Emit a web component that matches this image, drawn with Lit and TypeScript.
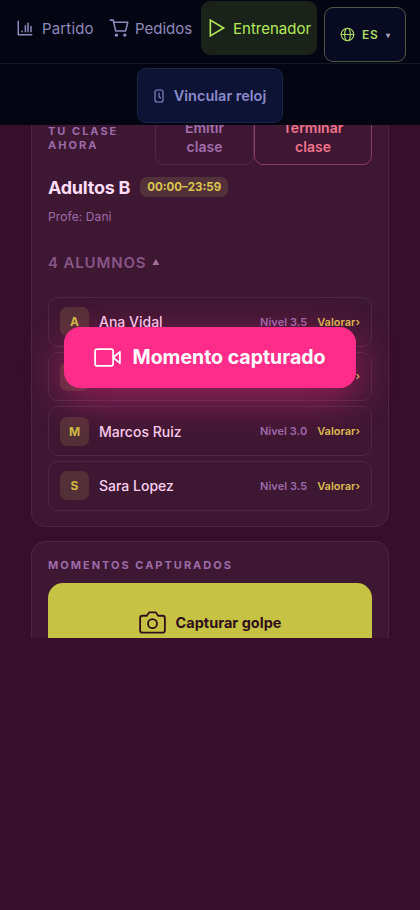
import { LitElement, html, css, svg } from "lit";
import { customElement } from "lit/decorators.js";

const icon = (cls: string, body: unknown, box = "0 0 24 24") =>
  html`<svg class="icon ${cls}" viewBox=${box} fill="none" stroke="currentColor" stroke-linecap="round" stroke-linejoin="round">${body}</svg>`;

const chart = svg`<path d="M3 3v18h18M8 16v1M12.500 9v8M16 5.500V17M20 10v7"/>`;
const cart = svg`<path d="M1.500 2.500h3.500l3 13h12l2.500-10.500H5.800"/><circle cx="9" cy="20.500" r="1.100" fill="currentColor"/><circle cx="19" cy="20.500" r="1.100" fill="currentColor"/>`;
const play = svg`<path d="M4 2.500v19L20 12z" stroke-linejoin="miter"/>`;
const globe = svg`<circle cx="12" cy="12" r="10"/><ellipse cx="12" cy="12" rx="4.500" ry="10"/><path d="M2 12h20"/>`;
const watch = svg`<rect x="1" y="1" width="8" height="12" rx="2"/><path d="M5 4v3.500l1.500 1.500"/>`;
const video = svg`<rect x="1" y="4.500" width="16" height="15" rx="2"/><path d="M17 12l6-5v10z"/>`;
const camera = svg`<path d="M23 19a2 2 0 0 1-2 2H3a2 2 0 0 1-2-2V8a2 2 0 0 1 2-2h4l2-3h6l2 3h4a2 2 0 0 1 2 2z"/><circle cx="12" cy="13" r="4"/>`;

@customElement("student-row")
class StudentRow extends LitElement {
  static properties = { name: {}, level: {} };
  declare name: string;
  declare level: string;
  static styles = css`
    :host { display: flex; align-items: center; box-sizing: border-box; height: 49.500px; padding: 0 11px; border: 1px solid #4d2848; border-radius: 10px; }
    .avatar { width: 29px; height: 29px; border-radius: 7px; background: #533037; color: #cdbb45; display: grid; place-items: center; font-size: 12px; font-weight: 700; }
    .name { flex: 1; margin-left: 10px; font-size: 14px; font-weight: 500; color: #fbd0f0; }
    .level { font-size: 11px; font-weight: 600; color: #9d6bac; letter-spacing: 0.050px; }
    .rate { margin-left: 10px; font-size: 11px; font-weight: 600; color: #dcbd50; }
  `;
  render() {
    return html`<span class="avatar">${this.name[0]}</span><span class="name">${this.name}</span>
      <span class="level">Nivel ${this.level}</span><span class="rate">Valorar›</span>`;
  }
}

@customElement("app-root")
class AppRoot extends LitElement {
  static styles = css`
    :host { display: block; position: relative; height: 910px; overflow: hidden; background: #370f2a; font-family: Inter, "Liberation Sans", sans-serif; }
    * { box-sizing: border-box; }
    .icon { display: block; flex: none; }
    header { height: 125px; background: #030612; color: #9189bd; }
    nav { height: 64px; border-bottom: 1px solid #141724; display: flex; align-items: flex-start; }
    .tab { display: flex; align-items: center; height: 54px; margin-top: 1px; font-size: 15px; }
    .t1 { padding-left: 16px; width: 109px; gap: 8px; letter-spacing: 0.150px; }
    .t2 { width: 92px; gap: 6px; }
    .t3 { width: 116px; padding-left: 6px; gap: 6px; border-radius: 9px; background: #1b2219; color: #b2eb5b; }
    .i18 { width: 18px; height: 18px; stroke-width: 2; }
    .i20 { width: 20px; height: 20px; stroke-width: 1.900; }
    .lang { display: flex; align-items: center; width: 82px; height: 55px; margin: 7px 0 0 7px; padding-left: 15px; border: 1px solid #4f5745; border-radius: 9px; background: #080a22; color: #acd960; font-size: 12px; font-weight: 600; letter-spacing: 0.800px; }
    .lang b { font-weight: 600; margin: 0 7px 0 7px; }
    .caret { color: #a9a6c0; font-size: 8px; }
    .i14 { width: 15px; height: 15px; stroke-width: 1.900; }
    .sub { display: flex; justify-content: center; padding-top: 4px; }
    .pair { display: flex; align-items: center; justify-content: center; gap: 10px; width: 146px; height: 55px; border: 1px solid #1a2446; border-radius: 9px; background: #0d1335; font-size: 14.500px; font-weight: 600; color: #8b8bcb; }
    .watch { width: 10px; height: 14px; stroke-width: 1.100; }
    main { height: 512.500px; overflow: hidden; padding: 0 31px; }
    .card { border: 1px solid #4b2744; border-radius: 14px; background: #3e1732; padding: 16px; }
    .first { margin-top: -32px; height: 434px; }
    .top { display: flex; align-items: center; }
    .label { font-size: 11px; line-height: 14px; font-weight: 700; letter-spacing: 2px; color: #9d6ba9; }
    .top .label { width: 107px; }
    .btn { height: 55px; display: grid; place-items: center; text-align: center; border: 1px solid #50294a; border-radius: 9px; font-size: 14px; line-height: 18.500px; font-weight: 600; color: #a36ead; }
    .emit { width: 99px; }
    .end { width: 118px; border-color: #8c3d62; color: #f0738c; }
    .title { display: flex; align-items: center; height: 20px; margin-top: 12px; gap: 10px; font-size: 18px; font-weight: 700; color: #ffdcf7; letter-spacing: -0.250px; }
    .chip { height: 20px; width: 88px; display: grid; place-items: center; border-radius: 7px; background: #53313a; color: #dac44e; font-size: 11.500px; letter-spacing: 0; }
    .coach { margin-top: 11px; line-height: 17px; font-size: 12px; letter-spacing: 0.100px; color: #a06bab; }
    .count { display: flex; align-items: center; gap: 6px; height: 20px; margin-top: 27px; font-size: 15px; font-weight: 600; letter-spacing: 0.850px; color: #895587; }
    .up { width: 7px; height: 6px; background: #a27299; clip-path: polygon(50% 0, 100% 100%, 0 100%); }
    .list { display: grid; gap: 5.200px; margin-top: 25px; }
    .second { margin-top: 14px; height: 170px; }
    .capture { display: flex; align-items: center; justify-content: center; gap: 10px; height: 78px; margin-top: 11px; border-radius: 15px; background: #c6c244; color: #2f0e1b; font-size: 14.500px; font-weight: 700; }
    .i26 { width: 27px; height: 27px; stroke-width: 1.600; }
    .toast { position: absolute; left: 64px; top: 327px; width: 292px; height: 60.500px; border-radius: 16px; background: #ff2c8a; color: #fff; display: flex; align-items: center; justify-content: center; gap: 11px; font-size: 19.500px; font-weight: 700; box-shadow: 0 12px 40px rgba(255, 44, 138, 0.450); }
  `;
  render() {
    const students = [["Ana Vidal", "3.5"], ["Leo Martin", "3.0"], ["Marcos Ruiz", "3.0"], ["Sara Lopez", "3.5"]];
    return html`
      <header>
        <nav>
          <span class="tab t1">${icon("i18", chart)}Partido</span>
          <span class="tab t2">${icon("i20", cart)}Pedidos</span>
          <span class="tab t3">${icon("i20", play)}Entrenador</span>
          <span class="lang">${icon("i14", globe)}<b>ES</b><span class="caret">▾</span></span>
        </nav>
        <div class="sub"><div class="pair">${icon("watch", watch, "0 0 10 14")}Vincular reloj</div></div>
      </header>
      <main>
        <section class="card first">
          <div class="top">
            <div class="label">TU CLASE<br />AHORA</div>
            <div class="btn emit"><span>Emitir<br />clase</span></div>
            <div class="btn end"><span>Terminar<br />clase</span></div>
          </div>
          <div class="title">Adultos B <span class="chip">00:00–23:59</span></div>
          <div class="coach">Profe: Dani</div>
          <div class="count">4 ALUMNOS <span class="up"></span></div>
          <div class="list">${students.map(([n, l]) => html`<student-row .name=${n} .level=${l}></student-row>`)}</div>
        </section>
        <section class="card second">
          <div class="label">MOMENTOS CAPTURADOS</div>
          <div class="capture">${icon("i26", camera)}Capturar golpe</div>
        </section>
      </main>
      <div class="toast">${icon("i26", video)}Momento capturado</div>
    `;
  }
}
